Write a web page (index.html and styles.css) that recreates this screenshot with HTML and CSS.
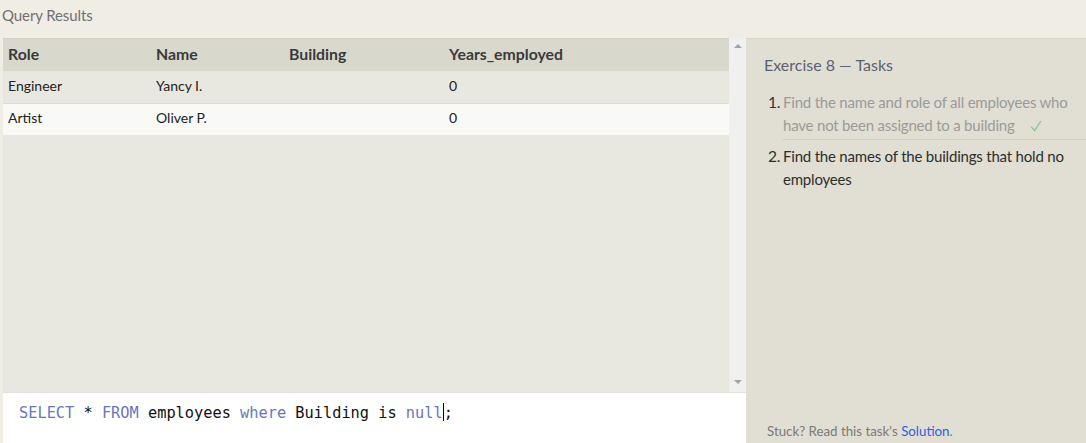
FILE: index.html
```html
<!DOCTYPE html>
<html>
<head>
<meta charset="utf-8">
<link rel="stylesheet" href="styles.css">
</head>
<body>
<div class="page">
  <div class="title">Query Results</div>
  <div class="main">
    <div class="left">
      <div class="results">
        <div class="table-wrap">
          <table class="grid">
            <thead>
              <tr><th class="c1">Role</th><th class="c2">Name</th><th class="c3">Building</th><th class="c4">Years_employed</th></tr>
            </thead>
            <tbody>
              <tr class="odd"><td>Engineer</td><td>Yancy I.</td><td></td><td>0</td></tr>
              <tr class="even"><td>Artist</td><td>Oliver P.</td><td></td><td>0</td></tr>
            </tbody>
          </table>
        </div>
        <div class="scrollbar">
          <span class="arrow up"></span>
          <span class="arrow down"></span>
        </div>
      </div>
      <div class="editor"><span class="kw">SELECT</span> * <span class="kw">FROM</span> employees <span class="kw">where</span> Building is <span class="kw">null</span><span class="cursor"></span>;</div>
    </div>
    <div class="right">
      <div class="ex-title">Exercise 8 — Tasks</div>
      <ol class="tasks">
        <li class="done"><span class="num">1.</span><span class="txt">Find the name and role of all employees who have not been assigned to a building<svg class="check" width="12" height="12" viewBox="0 0 12 12"><path d="M1.2 6.8 L4.6 10.6 L10.8 1.2" fill="none" stroke="#8bc98e" stroke-width="1.3"/></svg></span></li>
        <li class="todo"><span class="num">2.</span><span class="txt">Find the names of the buildings that hold no employees</span></li>
      </ol>
      <div class="stuck">Stuck? Read this task's <a class="link">Solution</a>.</div>
    </div>
  </div>
</div>
</body>
</html>
```
FILE: styles.css
```css
html, body {
  margin: 0;
  padding: 0;
  background: #f0ede5;
}
body {
  font-family: Lato, "Open Sans", sans-serif;
  width: 1086px;
  height: 443px;
  overflow: hidden;
}
.page {
  display: flex;
  flex-direction: column;
  height: 443px;
}
.title {
  height: 38px;
  box-sizing: border-box;
  padding: 6px 0 0 2px;
  font-size: 15px;
  letter-spacing: -0.1px;
  color: #707070;
}
.main {
  flex: 1;
  display: flex;
  padding-left: 3px;
}
.left {
  width: 743px;
  display: flex;
  flex-direction: column;
}
.results {
  height: 354px;
  display: flex;
  background: #e9e8e0;
}
.table-wrap {
  width: 726px;
}
.grid {
  width: 100%;
  border-collapse: collapse;
  font-size: 14px;
  color: #222;
}
.grid th {
  background: #d9d8cc;
  height: 33px;
  text-align: left;
  font-weight: bold;
  font-size: 15.8px;
  color: #3a3a3a;
  padding: 0 0 2px 5px;
  box-sizing: border-box;
  box-shadow: inset 0 1px 0 #d2d0c4;
}
.grid td {
  height: 32px;
  padding: 0 0 3px 5px;
  box-sizing: border-box;
}
.grid .c1 { width: 148px; }
.grid .c2 { width: 133px; }
.grid .c3 { width: 160px; }
.grid tr.odd td { background: #e9e8e0; border-bottom: 1px solid #dddcd4; }
.grid tr.even td { background: #f9f9f8; }
.scrollbar {
  width: 17px;
  background: #f0f0f0;
  display: flex;
  flex-direction: column;
  justify-content: space-between;
  align-items: center;
  padding: 6px 0 8px;
  box-sizing: border-box;
}
.arrow {
  width: 0;
  height: 0;
  border-left: 4px solid transparent;
  border-right: 4px solid transparent;
}
.arrow.up { border-bottom: 4px solid #a3a3a3; }
.arrow.down { border-top: 4px solid #a3a3a3; }
.editor {
  flex: 1;
  background: #ffffff;
  font-family: "DejaVu Sans Mono", "Liberation Mono", monospace;
  font-size: 15.3px;
  color: #111;
  padding: 10px 0 0 16px;
  white-space: pre;
  border-top: 1px solid #e3e2dc;
}
.kw { color: #6877bd; }
.cursor {
  display: inline-block;
  width: 1px;
  height: 18px;
  background: #000;
  vertical-align: -3px;
}
.right {
  flex: 1;
  background: #e1ded3;
  display: flex;
  flex-direction: column;
  padding: 17px 0 0 18px;
  box-shadow: inset 0 1px 0 #d9d6ca;
}
.ex-title {
  font-size: 16px;
  color: #5c6173;
  margin-bottom: 17px;
}
.tasks {
  list-style: none;
  margin: 0;
  padding: 0 0 0 4px;
  font-size: 15px;
  letter-spacing: -0.2px;
  line-height: 23px;
}
.tasks li {
  display: flex;
}
.tasks .num {
  width: 15px;
  flex: none;
  font-size: 15.5px;
}
.tasks .txt {
  flex: 1;
  padding-right: 6px;
}
.tasks .done {
  color: #9b9b9b;
}
.tasks .done .num { color: #333; }
.tasks .done .txt { border-bottom: 1px solid #cfccc1; padding-bottom: 2px; }
.tasks .todo { color: #2e2e2e; }
.tasks .todo .txt, .tasks .todo .num { padding-top: 5px; }
.check {
  margin-left: 15px;
  vertical-align: -1px;
}
.stuck {
  margin-top: auto;
  margin-bottom: 4px;
  font-size: 13.3px;
  color: #7a7a7a;
  padding-left: 3px;
}
.link {
  color: #2c5fe0;
}
```
